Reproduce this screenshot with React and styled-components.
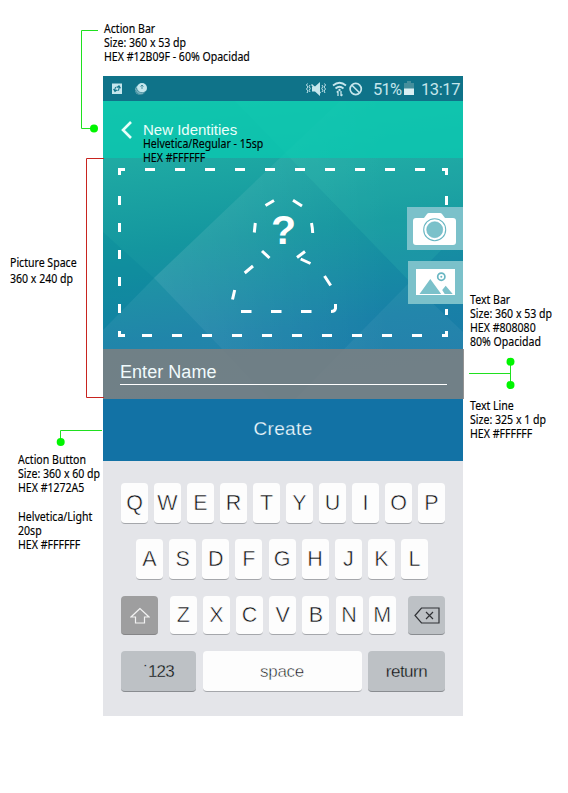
import React from "react";
import styled, { createGlobalStyle, css } from "styled-components";

const Global = createGlobalStyle`
  *{box-sizing:border-box}
  html,body{margin:0;background:#fff;overflow:hidden}
`;

const Board = styled.main`
  position: relative;
  display: grid;
  grid-template-columns: 103px 360px 1fr;
  grid-template-rows: 76px 640px;
  width: 568px;
  height: 793px;
  background: #fff;
  font-family: "Liberation Sans", Arial, sans-serif;
`;
const TopNotes = styled.div`
  grid-column: 2 / 4;
  padding: 22px 0 0 1px;
`;
const SideNotes = styled.aside`
  grid-row: 2;
  grid-column: ${(p) => p.$col};
  padding-left: ${(p) => p.$left || 0}px;
`;
const Note = styled.div`
  margin-top: ${(p) => p.$top || 0}px;
  margin-left: ${(p) => p.$left || 0}px;
`;
const Line = styled.div`
  width: max-content;
  height: ${(p) => p.$h || 14}px;
  white-space: nowrap;
  color: #000;
  font: 400 12px/14px "Noto Sans", "Open Sans", sans-serif;
  transform: scaleX(0.88);
  transform-origin: 0 0;
  -webkit-text-stroke: 0.15px #000;
`;
const Connectors = styled.svg`
  position: absolute;
  inset: 0;
  pointer-events: none;
`;
const Phone = styled.section`
  grid-row: 2;
  grid-column: 2;
  display: flex;
  flex-direction: column;
`;
const StatusBar = styled.header`
  display: flex;
  align-items: center;
  height: 25px;
  background: #0f7389;
  color: #c5e6ec;
  font: 400 16.5px/25px Roboto, sans-serif;
`;
const StatusIcons = styled.svg`
  flex: none;
  margin-left: ${(p) => p.$gap || 0}px;
`;
const StatusText = styled.span`
  margin-left: ${(p) => p.$gap}px;
  width: ${(p) => p.$w}px;
  padding-top: 2px;
  letter-spacing: ${(p) => p.$ls || 0}px;
  white-space: nowrap;
`;
const Hero = styled.div`
  position: relative;
  height: 298px;
`;
const Backdrop = styled.svg`
  position: absolute;
  inset: 0;
`;
const ActionBar = styled.div`
  position: relative;
  display: flex;
  height: 57px;
  padding: 19px 0 0 17px;
  background: rgba(8, 203, 177, 0.72);
  color: #eafffb;
`;
const Title = styled.div`
  margin-left: 9px;
  font-size: 15px;
  line-height: 20px;
`;
const TitleNote = styled.div`
  position: absolute;
  z-index: 2;
  left: 40px;
  top: 36px;
`;
const Picture = styled.div`
  position: relative;
  display: flex;
  flex-direction: column;
  align-items: flex-end;
  gap: 11px;
  height: 191px;
  padding-top: 49px;
`;
const FrameArt = styled.svg`
  position: absolute;
  inset: 0;
`;
const Mark = styled.span`
  position: absolute;
  left: 168px;
  top: 49px;
  width: 25px;
  text-align: center;
  color: #fff;
  font-size: 41px;
  line-height: 46px;
  font-weight: 700;
`;
const MediaButton = styled.button`
  position: relative;
  display: block;
  width: ${(p) => p.$w}px;
  height: 43px;
  padding: 0;
  border: 0;
  background: #7bc1ca;
  svg { display: block; }
`;
const TextBar = styled.div`
  position: relative;
  width: 361px;
  height: 50px;
  padding: 11px 0 0 17px;
  background: rgba(128, 128, 128, 0.84);
`;
const Field = styled.div`
  width: 327px;
  height: 25px;
  border-bottom: 1px solid #fff;
  color: #f0fbfd;
  font-size: 18px;
  line-height: 24px;
  letter-spacing: 0.05px;
`;
const Create = styled.button`
  height: 62px;
  padding: 0 0 3px;
  border: 0;
  background: #1272a5;
  color: #eefaff;
  font: 19px "Liberation Sans", Arial, sans-serif;
  letter-spacing: 0.35px;
  -webkit-text-stroke: 0.25px #1272a5;
`;
const Keyboard = styled.div`
  display: flex;
  flex-direction: column;
  height: 255px;
  padding: 22px 18px 0;
  background: #e4e5e9;
`;
const Row = styled.div`
  display: flex;
  justify-content: space-between;
  height: ${(p) => p.$h}px;
  margin: 0 ${(p) => p.$r || 0}px ${(p) => p.$b || 0}px ${(p) => p.$l || 0}px;
`;
const Letters = styled.div`
  display: flex;
  justify-content: space-between;
  width: 226px;
  margin-right: 0.5px;
`;
const tones = {
  light: css`background: #fdfdfd; border-color: #a5a7ab; -webkit-text-stroke: 0.5px #fdfdfd;`,
  grey: css`background: #bdc1c5; border-color: #898c90; -webkit-text-stroke: 0.3px #bdc1c5;`,
  dark: css`background: #9e9e9f; border-color: #858587;`,
};
const Key = styled.button`
  display: flex;
  align-items: center;
  justify-content: center;
  width: ${(p) => p.$w || 27}px;
  height: 100%;
  padding: 1px 0 0;
  border: 0;
  border-bottom: 1px solid;
  border-radius: 4px;
  ${(p) => tones[p.$tone || "light"]}
  color: #101114;
  font: ${(p) => p.$size || 21.5}px "Liberation Sans", Arial, sans-serif;
  letter-spacing: ${(p) => p.$ls || 0}px;
`;

const Notes = ({ lines }) =>
  lines.map(([text, h], i) => (
    <Line key={i} $h={h}>{text}</Line>
  ));

const topDashes = [145, 175, 205, 235, 265, 295, 325, 355, 385, 415];
const bottomDashes = [142, 172, 202, 232, 262, 292, 322, 352, 382, 412];
const leftDashes = [196, 223, 250, 277, 304];

export default function App() {
  return (
    <>
      <Global />
      <Board>
        <TopNotes>
          <Notes lines={[["Action Bar"], ["Size: 360 x 53 dp"], ["HEX #12B09F - 60% Opacidad"]]} />
        </TopNotes>

        <SideNotes $col={1}>
          <Note $top={180} $left={10}>
            <Notes lines={[["Picture Space", 16], ["360 x 240 dp"]]} />
          </Note>
          <Note $top={167} $left={18}>
            <Notes lines={[["Action Button"], ["Size: 360 x 60 dp"], ["HEX #1272A5", 29], ["Helvetica/Light"], ["20sp"], ["HEX #FFFFFF"]]} />
          </Note>
        </SideNotes>

        <Phone>
          <StatusBar>
            <StatusIcons $gap={9} width="36" height="25" viewBox="0 0 36 25">
              <rect x="0" y="7.500" width="10" height="10.500" fill="#c5e6ec" />
              <path d="M3 15.500V13q0-2 1.500-2M1.500 13L3 15.500 5 13.800M7 9.800V12.500q0 2-1.500 2M8.500 12.200L7 9.800 5 11.500" fill="none" stroke="#0f7389" strokeWidth="1.100" />
              <circle cx="28" cy="14" r="5" fill="#79b3c0" />
              <circle cx="30" cy="12" r="5" fill="#c5e6ec" />
              <path d="M30 13V9M28.500 10.500l1.500-1.500 1.500 1.500M24.500 12c1 5 7 6 9.500 3M23.500 14c1 5 7 6 9 3" fill="none" stroke="#317f91" strokeWidth=".8" />
            </StatusIcons>
            <StatusIcons $gap={158} width="58" height="25" viewBox="306 76 58 25">
              <g fill="none" stroke="#c5e6ec">
                <path d="M307.500 83.500l-1 1.500 1.500 2-1.500 2 1.500 2-1 2M310 85l-.8 1.500 1 2-1 2 .8 1.500M324.500 83.500l1 1.500-1.500 2 1.500 2-1.500 2 1 2M322 85l.8 1.500-1 2 1 2-.8 1.500" />
                <path d="M311.500 84.500l9 8.500" strokeWidth="1.500" />
                <path d="M333 85.500q6.500-5.500 13 0M335.500 88.500q4-3.500 8 0" strokeWidth="1.700" />
                <path d="M338 91v5m-1.200-3.500l1.200-1.500M341 91v5m0 0l1.500-1.500" strokeWidth="1.300" />
                <circle cx="355.700" cy="89" r="5.600" strokeWidth="1.700" />
                <path d="M351.700 85l8 8" strokeWidth="1.700" />
              </g>
              <path d="M312 86.500h3l5-4.500v14l-5-4.500h-3z" fill="#c5e6ec" />
              <circle cx="339.500" cy="90" r="1.200" fill="#c5e6ec" />
            </StatusIcons>
            <StatusText $gap={9} $w={31} $ls={-0.8}>51%</StatusText>
            <StatusIcons width="11" height="25" viewBox="404 76 11 25">
              <path d="M407 81h4v2h3v6h-10v-6h3z" fill="#458f9c" />
              <path d="M404 88.500h10V95h-10z" fill="#d9eff2" />
            </StatusIcons>
            <StatusText $gap={6} $w={41} $ls={-0.4}>13:17</StatusText>
          </StatusBar>

          <Hero>
            <Backdrop width="361" height="298" viewBox="103 101 361 298">
              <defs>
                <linearGradient id="sea" x1="0" y1="0" x2="0.15" y2="1">
                  <stop offset="0" stopColor="#26b9a3" />
                  <stop offset=".22" stopColor="#1ea9a3" />
                  <stop offset=".5" stopColor="#14969f" />
                  <stop offset=".82" stopColor="#1880a7" />
                  <stop offset="1" stopColor="#1a7aa8" />
                </linearGradient>
                <linearGradient id="sheen" x1="0" y1="0" x2="1" y2="0">
                  <stop offset="0" stopColor="#fff" stopOpacity=".11" />
                  <stop offset="1" stopColor="#fff" stopOpacity="0" />
                </linearGradient>
              </defs>
              <rect x="103" y="101" width="360" height="298" fill="url(#sea)" />
              <rect x="463" y="349" width="1" height="50" fill="#fff" />
              <path d="M154 278L340 101H390V349H222z" fill="url(#sheen)" />
              <path d="M103 330L154 278L270 399H103z" fill="#fff" opacity=".04" />
              <path d="M103 232L154 278L103 330z" fill="#007d94" opacity=".2" />
              <path d="M235 101L410 282L463 228V101z" fill="#4ee0bc" opacity=".12" />
              <path d="M410 282L295 399H463V332z" fill="#fff" opacity=".05" />
            </Backdrop>
            <ActionBar>
              <svg width="14" height="20" viewBox="0 0 14 20"><path d="M11 2L3 10l8 8" fill="none" stroke="#e8fffa" strokeWidth="2.600" /></svg>
              <Title>New Identities</Title>
              <TitleNote>
                <Notes lines={[["Helvetica/Regular - 15sp"], ["HEX #FFFFFF"]]} />
              </TitleNote>
            </ActionBar>
            <Picture>
              <FrameArt width="360" height="191" viewBox="103 158 360 191">
                <g fill="none" stroke="#fff" strokeWidth="3">
                  <path d="M119.500 175V169.500H125M442 169.500H446.500V175M119.500 331V335.500H125M442 335.500H446.500V331M446.500 196v9M446.500 309v6" />
                  <path d={topDashes.map((x) => `M${x} 169.500h10`).join("") + bottomDashes.map((x) => `M${x} 335.500h10`).join("") + leftDashes.map((y) => `M119.500 ${y}v9`).join("")} />
                  <path d="M265.500 205.500L274 200.500M254.300 232.500L255.300 223M262 251L269.500 258M244.700 273L253 266M232.500 299.500L234.700 290M241 311.500h10.500M271 311.500h10.500M301 311.500h10.500M331 311.500q4 0 4.500-3V304M293 200.300L302 206M311.500 223q1 5 1.200 10M297 257.500L305 251.500M300.700 259L310.500 263.500M324.500 276L330.700 285.500" />
                </g>
              </FrameArt>
              <Mark>?</Mark>
              <MediaButton $w={56} aria-label="Take photo">
                <svg width="56" height="43" viewBox="407 207 56 43">
                  <path d="M416 218h8l3-4q.7-1 2-1h11q1.300 0 2 1l3 4h8q3 0 3 3v21q0 3-3 3h-37q-3 0-3-3v-21q0-3 3-3z" fill="#fff" />
                  <circle cx="434.700" cy="229.700" r="11" fill="#fff" stroke="#68b6c2" strokeWidth="1.100" />
                  <circle cx="434.700" cy="229.700" r="8" fill="#7bc1ca" stroke="#68b6c2" strokeWidth=".6" />
                </svg>
              </MediaButton>
              <MediaButton $w={55} aria-label="Choose picture">
                <svg width="55" height="43" viewBox="408 261 55 43">
                  <path d="M416 269h39v26h-39z" fill="#fff" />
                  <path d="M419.500 294l10.800-15 10.900 15zM442.200 290l3.500-4.200 7 8.200h-8z" fill="#7bc1ca" />
                  <circle cx="441.300" cy="276.700" r="3.600" fill="none" stroke="#68b6c2" strokeWidth="1.700" />
                  <circle cx="441.300" cy="276.700" r="1" fill="#68b6c2" />
                </svg>
              </MediaButton>
            </Picture>
            <TextBar><Field>Enter Name</Field></TextBar>
          </Hero>

          <Create>Create</Create>

          <Keyboard>
            <Row $h={40.5} $b={15.5}>
              {[..."QWERTYUIOP"].map((k) => <Key key={k}>{k}</Key>)}
            </Row>
            <Row $h={40.5} $b={16.5} $l={15} $r={17}>
              {[..."ASDFGHJKL"].map((k) => <Key key={k}>{k}</Key>)}
            </Row>
            <Row $h={39} $b={16}>
              <Key $tone="dark" $w={37} aria-label="Shift">
                <svg width="20" height="18" viewBox="0 0 20 18"><path d="M10 1.500L1 10h4.500v6h9v-6H19z" fill="none" stroke="#f2f2f2" strokeWidth="1.200" /></svg>
              </Key>
              <Letters>{[..."ZXCVBNM"].map((k) => <Key key={k}>{k}</Key>)}</Letters>
              <Key $tone="grey" $w={37} aria-label="Backspace">
                <svg width="26" height="17" viewBox="0 0 26 17"><path d="M1 8.500L7.500 1H25v15H7.500zM12 5l7 7M19 5l-7 7" fill="none" stroke="#303236" strokeWidth="1.200" /></svg>
              </Key>
            </Row>
            <Row $h={41}>
              <Key $tone="grey" $w={75} $size={17} $ls={-0.9}>˙123</Key>
              <Key $w={159} $size={17} $ls={-0.3}>space</Key>
              <Key $tone="grey" $w={77} $size={17} $ls={-0.5}>return</Key>
            </Row>
          </Keyboard>
        </Phone>

        <SideNotes $col={3} $left={7}>
          <Note $top={217}>
            <Notes lines={[["Text Bar"], ["Size: 360 x 53 dp"], ["HEX #808080"], ["80% Opacidad"]]} />
          </Note>
          <Note $top={50}>
            <Notes lines={[["Text Line"], ["Size: 325 x 1 dp"], ["HEX #FFFFFF"]]} />
          </Note>
        </SideNotes>

        <Connectors width="568" height="793" viewBox="0 0 568 793">
          <g fill="none" stroke="#1fe01f">
            <path d="M98 30.500H81.500V128.500H94M102 430.500H60.500V442M469 373.500H510.500M510.500 361V385" />
          </g>
          <path d="M104 158.500H86.500V397.500H104" fill="none" stroke="#c8241f" />
          <g fill="#00f500">
            <circle cx="94" cy="128.500" r="4" />
            <circle cx="60.700" cy="442" r="4" />
            <circle cx="510.500" cy="361.700" r="4" />
            <circle cx="510.500" cy="385" r="4" />
          </g>
        </Connectors>
      </Board>
    </>
  );
}
